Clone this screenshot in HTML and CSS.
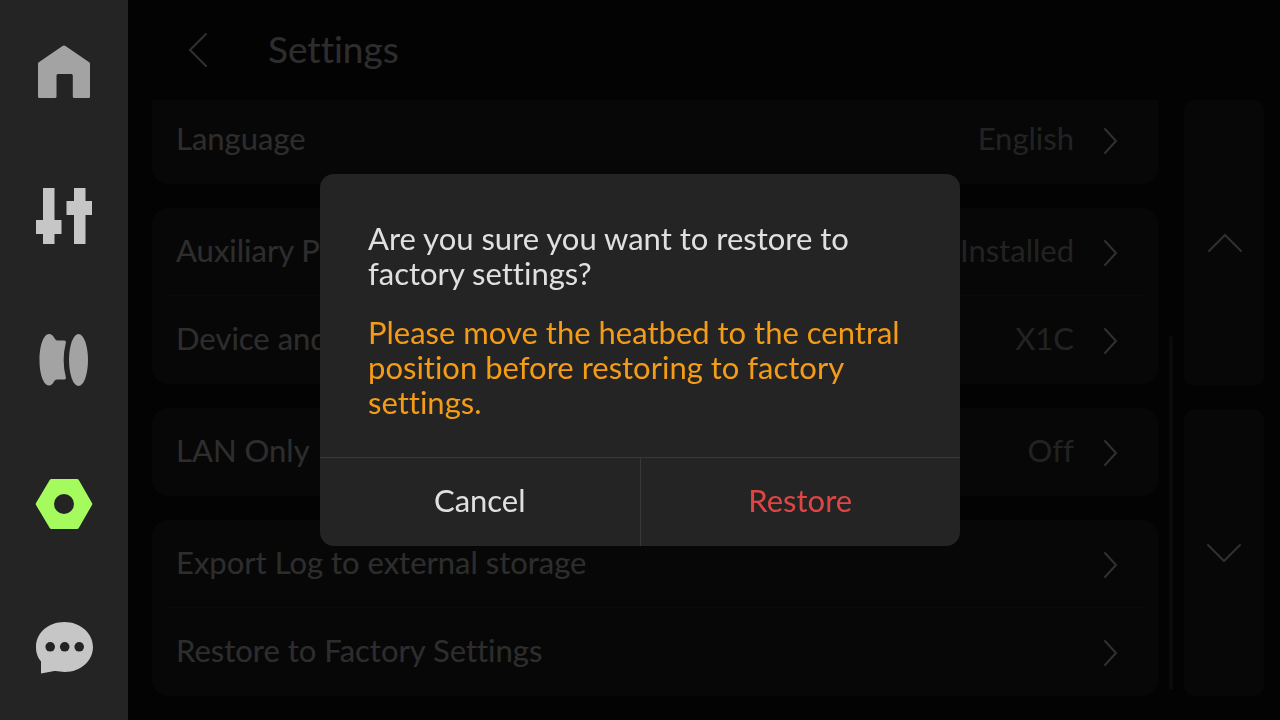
FILE: index.html
```html
<!DOCTYPE html>
<html lang="en">
<head>
  <meta charset="UTF-8" />
  <meta name="viewport" content="width=device-width, initial-scale=1" />
  <title>Settings</title>
  <link rel="stylesheet" href="styles.css">
</head>
<body>
  <nav class="sidebar">
    <a href="#home" class="nav-item" aria-label="Home">
      <svg width="64" height="64" viewBox="0 0 64 64" fill="#a3a3a3">
        <path d="M30.500 6Q32 5 33.500 6L57.200 22.200Q58 22.800 58 23.800V56.500Q58 58 56.500 58H42.300Q40.800 58 40.800 56.500V35.500Q40.800 34 39.300 34H26Q24.500 34 24.500 35.500V56.500Q24.500 58 23 58H7.500Q6 58 6 56.500V23.800Q6 22.800 6.800 22.200Z"/>
      </svg>
    </a>
    <a href="#control" class="nav-item" aria-label="Control">
      <svg width="64" height="64" viewBox="0 0 64 64" fill="#c6c6c6">
        <path d="M11 4H22.500V36H29.500V50H22.500V60H11V50H4V36H11Z"/>
        <path d="M42 4H53.500V17H60V31H53.500V60H42V31H34.500V17H42Z"/>
      </svg>
    </a>
    <a href="#filament" class="nav-item" aria-label="Filament">
      <svg width="64" height="64" viewBox="0 0 64 64" fill="#a3a3a3">
        <path d="M17 6C20 6 21.500 8.500 23 11Q24 12.500 26 12.500H32Q34.500 12.500 33.800 15Q29.500 32 33.800 49Q34.500 51.500 32 51.500H25Q23 51.500 22 53.500Q20 57.500 17 57.500C11.500 57.500 7.500 46 7.500 32S11.500 6 17 6Z"/>
        <ellipse cx="46.500" cy="32" rx="9.500" ry="26"/>
      </svg>
    </a>
    <a href="#settings" class="nav-item" aria-label="Settings">
      <svg width="64" height="64" viewBox="0 0 64 64" fill="#a5fa5e">
        <path fill-rule="evenodd" d="M19.500 7H45Q46.200 7 46.800 8L60 31Q60.500 32 60 33L46.800 56Q46.200 57 45 57H19.500Q18.300 57 17.700 56L4 33Q3.500 32 4 31L17.700 8Q18.300 7 19.500 7ZM32 22A10 10 0 1 0 32 42A10 10 0 1 0 32 22Z"/>
      </svg>
    </a>
    <a href="#messages" class="nav-item" aria-label="Messages">
      <svg width="64" height="64" viewBox="0 0 64 64">
        <path fill="#c6c6c6" d="M32.500 6C48 6 61 17 61 31S48.500 56 33 56C28 56 26 54.500 21 55.200L9 57.500V45.500C5.500 41 4 37 4 31C4 17 16 6 32.500 6Z"/>
        <g fill="#242424"><circle cx="18.200" cy="30.800" r="4.800"/><circle cx="32.700" cy="30.800" r="4.800"/><circle cx="47.200" cy="30.800" r="4.800"/></g>
      </svg>
    </a>
  </nav>

  <main class="page">
    <header class="page-header">
      <button type="button" class="back" aria-label="Back">
        <svg width="40" height="40" viewBox="0 0 40 40"><path d="M28 4L12 20L28 36"/></svg>
      </button>
      <h1>Settings</h1>
    </header>

    <div class="content">
      <div class="list">
        <section class="card card-cut">
          <a href="#language" class="row">
            <span class="name">Language</span><span class="value">English</span>
            <svg class="arrow" width="24" height="32" viewBox="0 0 24 32"><path d="M7 5L18 17L7 29"/></svg>
          </a>
        </section>
        <section class="card">
          <a href="#fan" class="row">
            <span class="name">Auxiliary Part</span><span class="value">Installed</span>
            <svg class="arrow" width="24" height="32" viewBox="0 0 24 32"><path d="M7 5L18 17L7 29"/></svg>
          </a>
          <a href="#device" class="row">
            <span class="name">Device and</span><span class="value">X1C</span>
            <svg class="arrow" width="24" height="32" viewBox="0 0 24 32"><path d="M7 5L18 17L7 29"/></svg>
          </a>
        </section>
        <section class="card">
          <a href="#lan" class="row">
            <span class="name">LAN Only</span><span class="value">Off</span>
            <svg class="arrow" width="24" height="32" viewBox="0 0 24 32"><path d="M7 5L18 17L7 29"/></svg>
          </a>
        </section>
        <section class="card">
          <a href="#export" class="row">
            <span class="name">Export Log to external storage</span>
            <svg class="arrow" width="24" height="32" viewBox="0 0 24 32"><path d="M7 5L18 17L7 29"/></svg>
          </a>
          <a href="#restore" class="row">
            <span class="name">Restore to Factory Settings</span>
            <svg class="arrow" width="24" height="32" viewBox="0 0 24 32"><path d="M7 5L18 17L7 29"/></svg>
          </a>
        </section>
      </div>

      <div class="scroll-track"><div class="scroll-thumb"></div></div>

      <div class="pager">
        <button type="button" aria-label="Scroll up">
          <svg width="40" height="40" viewBox="0 0 40 40"><path d="M5 28L21 12L37 28"/></svg>
        </button>
        <button type="button" aria-label="Scroll down">
          <svg width="40" height="40" viewBox="0 0 40 40"><path d="M4 12L20 28L36 12"/></svg>
        </button>
      </div>
    </div>
  </main>

  <div class="overlay">
    <div class="dialog" role="dialog" aria-modal="true" aria-labelledby="dialog-question">
      <div class="dialog-body">
        <p id="dialog-question">Are you sure you want to restore to factory settings?</p>
        <p class="warning">Please move the heatbed to the central position before restoring to factory settings.</p>
      </div>
      <div class="dialog-actions">
        <button type="button">Cancel</button>
        <button type="button" class="danger">Restore</button>
      </div>
    </div>
  </div>
</body>
</html>
```
FILE: styles.css
```css
* {
  box-sizing: border-box;
}
body {
  display: flex;
  min-height: 100vh;
  margin: 0;
  background-color: #101010;
  color: #e0e0e0;
  font-family: Lato, "Liberation Sans", sans-serif;
  font-size: 31px;
  line-height: 35px;
  font-variant-ligatures: none;
}
a {
  color: inherit;
  text-decoration: none;
}
button {
  padding: 0;
  border: none;
  background: none;
  color: inherit;
  font: inherit;
  cursor: pointer;
}
svg {
  display: block;
}

/* left navigation, stays above the overlay */
.sidebar {
  position: relative;
  z-index: 2;
  display: flex;
  flex-direction: column;
  width: 128px;
  background-color: #242424;
}
.nav-item {
  flex: 1;
  display: flex;
  align-items: center;
  justify-content: center;
}

.page {
  flex: 1;
  padding: 0 16px 24px 24px;
}
.page-header {
  display: flex;
  align-items: center;
  height: 100px;
}
.page-header h1 {
  margin: 0;
  padding-bottom: 4px;
  font-size: 37px;
  font-weight: normal;
}
.back {
  margin: 0 50px 0 26px;
}
.back path,
.pager path,
.arrow path {
  fill: none;
  stroke: #f0f0f0;
  stroke-width: 2;
  stroke-linecap: round;
}

.content {
  display: flex;
}
.list {
  flex: 1;
  display: flex;
  flex-direction: column;
  gap: 24px;
}
.card {
  border-radius: 16px;
  background-color: #242424;
  overflow: hidden;
}
/* first card is scrolled a little under the header */
.card-cut {
  border-radius: 0 0 16px 16px;
}
.card-cut .row {
  margin-top: -4px;
}
.row {
  position: relative;
  display: flex;
  align-items: center;
  height: 88px;
  padding: 0 36px 0 24px;
}
.row + .row::before {
  content: "";
  position: absolute;
  top: -1px;
  left: 12px;
  right: 12px;
  height: 1px;
  background-color: #333;
}
.name,
.value {
  padding-bottom: 4px;
}
.name {
  flex: 1;
}
.value {
  color: #a8a8a8;
}
.arrow {
  margin-left: 24px;
}

.scroll-track {
  display: flex;
  align-items: flex-end;
  padding: 0 11px 6px;
}
.scroll-thumb {
  width: 4px;
  height: 60%;
  border-radius: 2px;
  background-color: #333;
}

.pager {
  display: flex;
  flex-direction: column;
  gap: 24px;
}
.pager button {
  flex: 1;
  display: flex;
  align-items: center;
  justify-content: center;
  width: 80px;
  border-radius: 10px;
  background-color: #242424;
}

.overlay {
  position: fixed;
  inset: 0;
  z-index: 1;
  display: flex;
  align-items: center;
  justify-content: center;
  background-color: rgba(0, 0, 0, 0.8);
}
.dialog {
  width: 640px;
  border-radius: 14px;
  background-color: #242424;
  overflow: hidden;
}
.dialog-body {
  padding: 47px 48px 37px;
}
.dialog-body p {
  margin: 0;
}
.dialog-body .warning {
  margin-top: 24px;
  color: #f49c17;
}
.dialog-actions {
  display: flex;
  border-top: 1px solid #383838;
}
.dialog-actions button {
  flex: 1;
  height: 88px;
  padding-bottom: 3px;
}
.dialog-actions .danger {
  border-left: 1px solid #383838;
  color: #e04545;
}
```
